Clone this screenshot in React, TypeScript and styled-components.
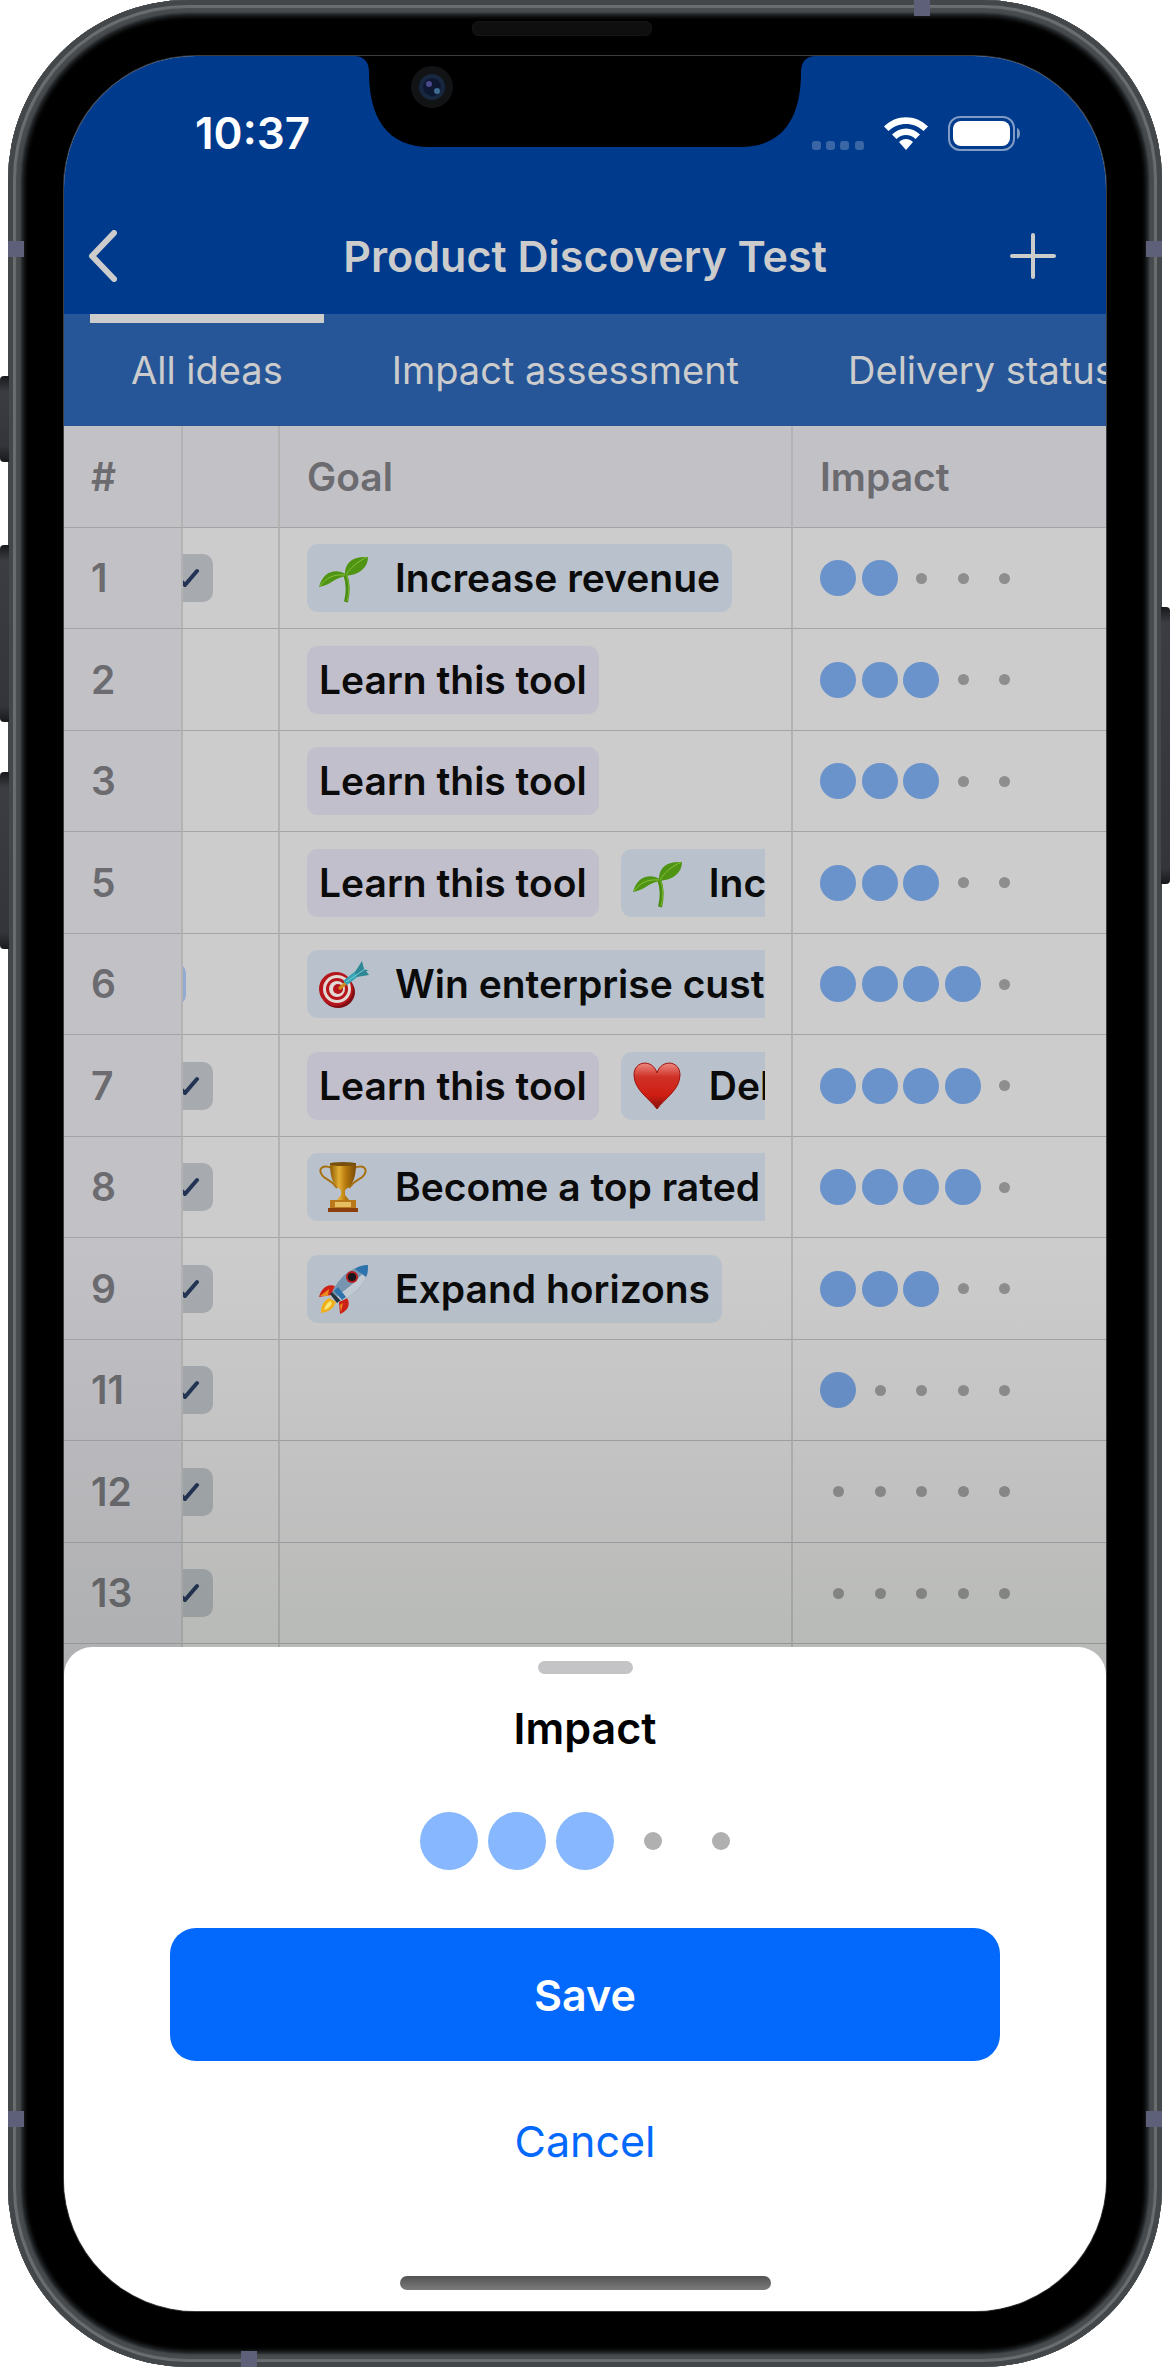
import React, { useState } from "react";
import styled, { createGlobalStyle, css } from "styled-components";

const GlobalStyle = createGlobalStyle`
  *, *::before, *::after { box-sizing: border-box; }
  body {
    margin: 0;
    background: #fff;
    font-family: Inter, "Liberation Sans", sans-serif;
    -webkit-font-smoothing: antialiased;
  }
  button { font-family: inherit; cursor: pointer; }
`;

/* ---------- device ---------- */

const Page = styled.div`
  padding: 0 8px;
  overflow: hidden;
`;

const Device = styled.div`
  position: relative;
  padding: 56px;
  border-radius: 180px;
  background: #000;
  box-shadow:
    inset 0 0 0 5px #43474a,
    inset 0 0 1px 8px #6b6e70,
    inset 0 0 2px 13px #474b4e,
    inset 0 0 4px 16px #2b2f32;
`;

const SideButton = styled.span<{ $side: "left" | "right"; $top: number; $height: number }>`
  position: absolute;
  ${(p) => p.$side}: -8px;
  top: ${(p) => p.$top}px;
  width: 9px;
  height: ${(p) => p.$height}px;
  border-radius: ${(p) => (p.$side === "left" ? "4px 0 0 4px" : "0 4px 4px 0")};
  background: linear-gradient(#17191c, #3b3d42 16px, #33353a calc(100% - 16px), #17191c);
`;

const AntennaBand = styled.span<{ $edge: "left" | "right" | "top" | "bottom"; $at: string }>`
  position: absolute;
  width: 16px;
  height: 16px;
  background: #5d6078;
  ${(p) => p.$edge}: 0;
  ${(p) => (p.$edge === "left" || p.$edge === "right" ? "top" : "left")}: ${(p) => p.$at};
`;

const Speaker = styled.span`
  position: absolute;
  top: 21px;
  left: 50%;
  width: 180px;
  height: 15px;
  margin-left: -113px;
  border-radius: 6px;
  background: #0f0f0f;
  border: 1px solid #141414;
`;

const NotchArt = styled.svg`
  position: absolute;
  top: 0;
  left: 50%;
  width: 462px;
  height: 92px;
  margin-left: -231px;
`;

const Screen = styled.main`
  position: relative;
  overflow: hidden;
  border-radius: 132px;
  background: #ccc;
  box-shadow: 0 0 0 1px #3d3d3d;
`;

/* ---------- header ---------- */

const Header = styled.header`
  background: #003a8c;
`;

const StatusBar = styled.div`
  display: flex;
  align-items: center;
  justify-content: space-between;
  height: 142px;
  padding: 12px 85px 0 131px;
  color: #fff;
  font-size: 44px;
  line-height: 52px;
  font-weight: 600;
`;

const StatusIcons = styled.div`
  display: flex;
  align-items: center;
  gap: 20px;
`;

const NavBar = styled.div`
  display: grid;
  grid-template-columns: 114px 1fr 114px;
  align-items: center;
  height: 116px;
  padding: 0 16px;
`;

const NavButton = styled.button<{ $align: "start" | "center" }>`
  display: flex;
  justify-content: ${(p) => p.$align};
  align-items: center;
  height: 80px;
  padding: 0 8px;
  border: 0;
  background: none;
  color: #ccc;
`;

const NavTitle = styled.h1`
  margin: 0;
  color: #ccc;
  font-size: 43px;
  line-height: 52px;
  font-weight: 600;
  text-align: center;
  white-space: nowrap;
`;

const Tabs = styled.nav`
  display: flex;
  gap: 27px;
  height: 112px;
  padding-left: 26px;
  overflow: hidden;
  background: #265698;
`;

const Tab = styled.button<{ $active: boolean }>`
  flex: none;
  padding: 0 41px;
  border: 0;
  background: none;
  box-shadow: ${(p) => (p.$active ? "inset 0 9px 0 #ccc" : "none")};
  color: #ccc;
  font-size: 38px;
  line-height: 48px;
  white-space: nowrap;
`;

/* ---------- table ---------- */

const TableArea = styled.section`
  position: relative;
  &::after {
    content: "";
    position: absolute;
    left: 0;
    right: 0;
    bottom: 0;
    height: 500px;
    background: linear-gradient(rgba(20, 36, 16, 0), rgba(20, 36, 16, 0.1) 380px);
    pointer-events: none;
  }
`;

const IdeaTable = styled.table`
  width: 100%;
  table-layout: fixed;
  border-collapse: separate;
  border-spacing: 0;
  font-size: 39px;
  line-height: 48px;
  font-weight: 600;
`;

const Row = styled.tr`
  height: 102px;
  tbody &:nth-child(odd) { height: 101px; }
`;

const cell = css`
  padding: 0 0 0 27px;
  border-bottom: 1px solid #a4a4a6;
  border-right: 2px solid #b3b3b4;
  text-align: left;
  vertical-align: middle;
  &:last-child { border-right: 0; }
`;

const HeadCell = styled.th`
  ${cell}
  background: #c2c1c6;
  color: #6b6b70;
  font-weight: 600;
`;

const Cell = styled.td<{ $flush?: boolean }>`
  ${cell}
  ${(p) => p.$flush && "padding-left: 0;"}
`;

const Clip = styled.div`
  display: flex;
  overflow: hidden;
`;

const CheckMark = styled.input`
  appearance: none;
  flex: none;
  width: 48px;
  height: 48px;
  margin: 0 0 0 -18px;
  border-radius: 10px;
  background: #a7abb0
    url("data:image/svg+xml,%3Csvg xmlns='http://www.w3.org/2000/svg' viewBox='0 0 48 48'%3E%3Cpath d='M13 24l7 7 12-14' fill='none' stroke='%23233354' stroke-width='4' stroke-linecap='round' stroke-linejoin='round'/%3E%3C/svg%3E");
`;

const StatusPill = styled.span`
  width: 48px;
  height: 42px;
  margin-left: -45px;
  border-radius: 10px;
  background: #93abd2;
`;

const Chips = styled.div`
  display: flex;
  gap: 22px;
  margin-right: 26px;
  overflow: hidden;
`;

const Chip = styled.span<{ $tone: "blue" | "purple" }>`
  display: flex;
  flex: none;
  align-items: center;
  gap: 28px;
  height: 68px;
  padding: 0 12px;
  border-radius: 11px;
  background: ${(p) => (p.$tone === "blue" ? "#b9c2cc" : "#c2bfcc")};
  color: #0b0b0b;
  white-space: nowrap;
`;

const Score = styled.div`
  display: flex;
  justify-content: space-between;
  align-items: center;
  width: 202px;
`;

const ScoreDot = styled.span<{ $on: boolean }>`
  width: ${(p) => (p.$on ? 36 : 11)}px;
  height: ${(p) => (p.$on ? 36 : 11)}px;
  margin: 0 ${(p) => (p.$on ? "0" : "12px 0 13px")};
  border-radius: 50%;
  background: ${(p) => (p.$on ? "#6a92cb" : "#8e8e8e")};
`;

/* ---------- sheet ---------- */

const Sheet = styled.section`
  position: relative;
  display: flex;
  flex-direction: column;
  align-items: center;
  margin-top: -99px;
  padding: 14px 106px 21px;
  border-radius: 28px 28px 0 0;
  background: #fff;
`;

const Grabber = styled.span`
  width: 95px;
  height: 13px;
  border-radius: 7px;
  background: #c4c4c7;
`;

const SheetTitle = styled.h2`
  margin: 28px 0 0;
  color: #000;
  font-size: 43px;
  line-height: 52px;
  font-weight: 600;
`;

const RatingGroup = styled.div`
  display: flex;
  align-items: center;
  gap: 10px;
  height: 58px;
  margin-top: 58px;
`;

const RatingInput = styled.input<{ $on: boolean }>`
  appearance: none;
  flex: none;
  width: ${(p) => (p.$on ? 58 : 18)}px;
  height: ${(p) => (p.$on ? 58 : 18)}px;
  margin: 0 ${(p) => (p.$on ? 0 : 20)}px;
  border-radius: 50%;
  background: ${(p) => (p.$on ? "#86b7ff" : "#b0b0b0")};
`;

const SaveButton = styled.button`
  align-self: stretch;
  height: 133px;
  margin-top: 58px;
  border: 0;
  border-radius: 26px;
  background: #0369fd;
  color: #fff;
  font-size: 43px;
  line-height: 52px;
  font-weight: 600;
`;

const CancelButton = styled.button`
  margin-top: 54px;
  padding: 0;
  border: 0;
  background: none;
  color: #0369fd;
  font-size: 43px;
  line-height: 52px;
`;

const HomeIndicator = styled.span`
  width: 371px;
  height: 14px;
  margin-top: 109px;
  border-radius: 7px;
  background: linear-gradient(#525352, #7a7b7a);
`;

/* ---------- drawings ---------- */

type EmojiName = "sprout" | "dart" | "heart" | "trophy" | "rocket";

const EmojiArt = styled.svg`
  flex: none;
  width: 48px;
  height: 48px;
  overflow: visible;
`;

function Emoji({ name }: { name: EmojiName }) {
  return (
    <EmojiArt viewBox="0 0 48 48" role="img" aria-label={name}>
      {name === "sprout" && (
        <>
          <path d="M26 20c3 8 4 16 1 28" fill="none" stroke="#4c8c12" strokeWidth="4" />
          <path d="M27 20c3 8 4 16 1 27" fill="none" stroke="#79b92c" strokeWidth="1" />
          <path d="M26 22C25 9 33 2 49 3 49 14 40 21 26 22z" fill="#4f9413" />
          <path d="M27 21C31 14 38 8 48 3" fill="none" stroke="#85c23a" strokeWidth="1" />
          <path d="M27 20C17 14 4 17 0 33c12-2 15-9 27-11z" fill="#4f9413" />
          <path d="M1 32c6-8 13-12 25-11" fill="none" stroke="#85c23a" strokeWidth="1" />
        </>
      )}
      {name === "dart" && (
        <>
          <ellipse cx="19" cy="32" rx="17" ry="16" fill="#7c0d12" />
          <circle cx="17" cy="29" r="17" fill="#b5161c" />
          <circle cx="18" cy="29" r="14" fill="#e3d9d4" />
          <circle cx="18" cy="29" r="11" fill="#b5161c" />
          <circle cx="18" cy="29" r="8" fill="#e3d9d4" />
          <circle cx="19" cy="29" r="5" fill="#b5161c" />
          <path d="M20 29l8-7" stroke="#d18a1e" strokeWidth="3" />
          <path d="M26 23l14-11" stroke="#38a3b3" strokeWidth="6" />
          <path d="M36 12l7-11 2 8 5 2-3 0 3 4-12 2z" fill="#2d8794" />
          <path d="M27 22L46 9" stroke="#75ccd4" strokeWidth="1" />
        </>
      )}
      {name === "heart" && (
        <>
          <defs>
            <linearGradient id="heartFill" x1="0" y1="0" x2="0" y2="1">
              <stop offset="0" stopColor="#ec8a80" />
              <stop offset="0.3" stopColor="#cf3127" />
              <stop offset="0.7" stopColor="#cf1d12" />
              <stop offset="1" stopColor="#80120c" />
            </linearGradient>
          </defs>
          <path
            d="M24 47C17 37 1 28 1 13 1-2 20-3 24 11 28-3 47-2 47 13c0 15-16 24-23 34z"
            fill="url(#heartFill)"
            stroke="#a01610"
          />
        </>
      )}
      {name === "trophy" && (
        <>
          <defs>
            <linearGradient id="gold" x1="0" y1="0" x2="1" y2="0">
              <stop offset="0" stopColor="#8c5a06" />
              <stop offset="0.35" stopColor="#e3ae33" />
              <stop offset="0.6" stopColor="#b67a0d" />
              <stop offset="1" stopColor="#7a4a04" />
            </linearGradient>
          </defs>
          <path d="M13 5C3 1-1 6 3 12c3 5 9 4 15 13M35 5c10-4 14 1 10 7-3 5-9 4-15 13" fill="none" stroke="#a87010" strokeWidth="2" />
          <path d="M11 0h26c0 15-3 22-11 27v5l4 5H18l4-5v-5C14 22 11 15 11 0z" fill="url(#gold)" />
          <ellipse cx="24" cy="1" rx="13" ry="2" fill="#76500c" />
          <path d="M11 37h26v8H11z" fill="#b9791b" />
          <path d="M16 39h16v5H16z" fill="#e6bf63" />
          <path d="M9 45h30v4H9z" fill="#8a3f0c" />
        </>
      )}
      {name === "rocket" && (
        <>
          <path d="M16 21C8 18 2 24 0 32l12-2zM28 33c4 6 1 13-7 16l-1-12z" fill="#cf2116" />
          <path d="M1 31l9-7-1 7zM22 47l2-9-3 2z" fill="#f08a1c" />
          <path d="M10 33C3 37 2 42 2 48c6-1 12-3 15-11z" fill="#f3b21c" />
          <path d="M11 36c-3 2-5 5-6 9 4-1 7-4 8-7z" fill="#fbea7a" />
          <path d="M11 29l7 9 4-3-8-9z" fill="#28333f" />
          <path d="M13 27C22 9 35 1 49 0c1 13-8 27-27 36z" fill="#7896b1" />
          <path d="M18 31C31 22 42 13 49 0c1 13-8 27-27 36z" fill="#c3ccd4" />
          <path d="M36 4c4-3 8-4 13-4 0 5 0 8-2 12z" fill="#2f74ad" />
          <path d="M15 26l8 9 4-3-8-10z" fill="#2f74ad" />
          <circle cx="33" cy="12" r="6" fill="#b91d1d" />
          <circle cx="33" cy="12" r="4" fill="#14161c" />
        </>
      )}
    </EmojiArt>
  );
}

function Notch() {
  return (
    <NotchArt viewBox="0 0 462 92" aria-hidden="true">
      <path
        d="M0-2v2c10 0 15 6 15 16C15 62 33 91 76 91h310c43 0 61-29 61-75 0-10 5-16 15-16v-2z"
        fill="#000"
      />
      <circle cx="78" cy="31" r="21" fill="#121315" />
      <circle cx="78" cy="31" r="13" fill="#16273f" />
      <circle cx="78" cy="31" r="9" fill="#0d1730" />
      <circle cx="75" cy="28" r="3" fill="#4b4a8c" />
      <circle cx="83" cy="35" r="3" fill="#3d6c90" />
    </NotchArt>
  );
}

function StatusGlyphs() {
  return (
    <StatusIcons>
      <svg width="52" height="34" viewBox="0 0 52 34" fill="#3b66a6" aria-hidden="true">
        {[0, 14, 28, 43].map((x) => (
          <rect key={x} x={x} y="25" width="9" height="9" rx="3" />
        ))}
      </svg>
      <svg width="44" height="33" viewBox="0 0 44 33" fill="#fff" aria-label="Wi-Fi">
        <path d="M0 9.500C12-3 32-3 44 9.500L39.500 14C30 4.500 14 4.500 4.500 14z" />
        <path d="M8 17.500c8-8 20-8 28 0L31.500 22c-5-5.500-14-5.500-19 0z" />
        <path d="M15 25c4-4 10-4 14 0l-7 8z" />
      </svg>
      <svg width="73" height="35" viewBox="0 0 73 35" aria-label="Battery">
        <rect x="1" y="1" width="65" height="33" rx="11" fill="none" stroke="#7f9cc5" strokeWidth="2" />
        <rect x="5" y="5" width="57" height="25" rx="8" fill="#fff" />
        <path d="M69 12c4 1 4 10 0 11z" fill="#7f9cc5" />
      </svg>
    </StatusIcons>
  );
}

/* ---------- data ---------- */

interface Goal {
  label: string;
  emoji?: EmojiName;
}

interface Idea {
  id: number;
  marker?: "check" | "pill";
  goals: Goal[];
  impact: number;
}

const learn: Goal = { label: "Learn this tool" };
const revenue: Goal = { label: "Increase revenue", emoji: "sprout" };

const ideas: Idea[] = [
  { id: 1, marker: "check", goals: [revenue], impact: 2 },
  { id: 2, goals: [learn], impact: 3 },
  { id: 3, goals: [learn], impact: 3 },
  { id: 5, goals: [learn, revenue], impact: 3 },
  { id: 6, marker: "pill", goals: [{ label: "Win enterprise customers", emoji: "dart" }], impact: 4 },
  { id: 7, marker: "check", goals: [learn, { label: "Delight users", emoji: "heart" }], impact: 4 },
  { id: 8, marker: "check", goals: [{ label: "Become a top rated app", emoji: "trophy" }], impact: 4 },
  { id: 9, marker: "check", goals: [{ label: "Expand horizons", emoji: "rocket" }], impact: 3 },
  { id: 11, marker: "check", goals: [], impact: 1 },
  { id: 12, marker: "check", goals: [], impact: 0 },
  { id: 13, marker: "check", goals: [], impact: 0 },
];

const views = ["All ideas", "Impact assessment", "Delivery status"];
const steps = [1, 2, 3, 4, 5];

function IdeaRow({ idea }: { idea: Idea }) {
  return (
    <Row>
      <HeadCell scope="row">{idea.id}</HeadCell>
      <Cell $flush>
        <Clip>
          {idea.marker === "check" && (
            <CheckMark type="checkbox" defaultChecked aria-label={`Idea ${idea.id} done`} />
          )}
          {idea.marker === "pill" && <StatusPill />}
        </Clip>
      </Cell>
      <Cell>
        <Chips>
          {idea.goals.map((goal) => (
            <Chip key={goal.label} $tone={goal.emoji ? "blue" : "purple"}>
              {goal.emoji && <Emoji name={goal.emoji} />}
              {goal.label}
            </Chip>
          ))}
        </Chips>
      </Cell>
      <Cell>
        <Score role="img" aria-label={`Impact ${idea.impact} of 5`}>
          {steps.map((n) => (
            <ScoreDot key={n} $on={n <= idea.impact} />
          ))}
        </Score>
      </Cell>
    </Row>
  );
}

export default function App() {
  const [view, setView] = useState(views[0]);
  const [impact, setImpact] = useState(3);

  return (
    <Page>
      <GlobalStyle />
      <Device>
        <SideButton $side="left" $top={376} $height={86} />
        <SideButton $side="left" $top={545} $height={177} />
        <SideButton $side="left" $top={772} $height={177} />
        <SideButton $side="right" $top={607} $height={277} />
        <AntennaBand $edge="left" $at="241px" />
        <AntennaBand $edge="right" $at="241px" />
        <AntennaBand $edge="left" $at="calc(100% - 256px)" />
        <AntennaBand $edge="right" $at="calc(100% - 256px)" />
        <AntennaBand $edge="top" $at="calc(100% - 248px)" />
        <AntennaBand $edge="bottom" $at="233px" />
        <Speaker />
        <Screen>
          <Header>
            <StatusBar>
              <span>10:37</span>
              <StatusGlyphs />
            </StatusBar>
            <NavBar>
              <NavButton $align="start" aria-label="Back">
                <svg width="29" height="52" viewBox="0 0 29 52" fill="none" stroke="currentColor" strokeWidth="6" strokeLinecap="round" strokeLinejoin="round">
                  <path d="M26 3L4 26l22 23" />
                </svg>
              </NavButton>
              <NavTitle>Product Discovery Test</NavTitle>
              <NavButton $align="center" aria-label="Add idea">
                <svg width="46" height="46" viewBox="0 0 46 46" fill="none" stroke="currentColor" strokeWidth="4" strokeLinecap="round">
                  <path d="M23 2v42M2 23h42" />
                </svg>
              </NavButton>
            </NavBar>
            <Tabs>
              {views.map((name) => (
                <Tab key={name} $active={name === view} onClick={() => setView(name)}>
                  {name}
                </Tab>
              ))}
            </Tabs>
          </Header>
          <TableArea>
            <IdeaTable>
              <colgroup>
                <col style={{ width: 119 }} />
                <col style={{ width: 97 }} />
                <col style={{ width: 513 }} />
                <col />
              </colgroup>
              <thead>
                <Row>
                  <HeadCell scope="col">#</HeadCell>
                  <HeadCell />
                  <HeadCell scope="col">Goal</HeadCell>
                  <HeadCell scope="col">Impact</HeadCell>
                </Row>
              </thead>
              <tbody>
                {ideas.map((idea) => (
                  <IdeaRow key={idea.id} idea={idea} />
                ))}
                <Row aria-hidden="true">
                  <HeadCell as="td" />
                  <Cell />
                  <Cell />
                  <Cell />
                </Row>
              </tbody>
            </IdeaTable>
          </TableArea>
          <Sheet aria-label="Impact">
            <Grabber />
            <SheetTitle>Impact</SheetTitle>
            <RatingGroup role="radiogroup" aria-label="Impact">
              {steps.map((n) => (
                <RatingInput
                  key={n}
                  type="radio"
                  name="impact"
                  value={n}
                  aria-label={`${n} of 5`}
                  checked={n === impact}
                  onChange={() => setImpact(n)}
                  $on={n <= impact}
                />
              ))}
            </RatingGroup>
            <SaveButton type="button">Save</SaveButton>
            <CancelButton type="button">Cancel</CancelButton>
            <HomeIndicator />
          </Sheet>
          <Notch />
        </Screen>
      </Device>
    </Page>
  );
}
